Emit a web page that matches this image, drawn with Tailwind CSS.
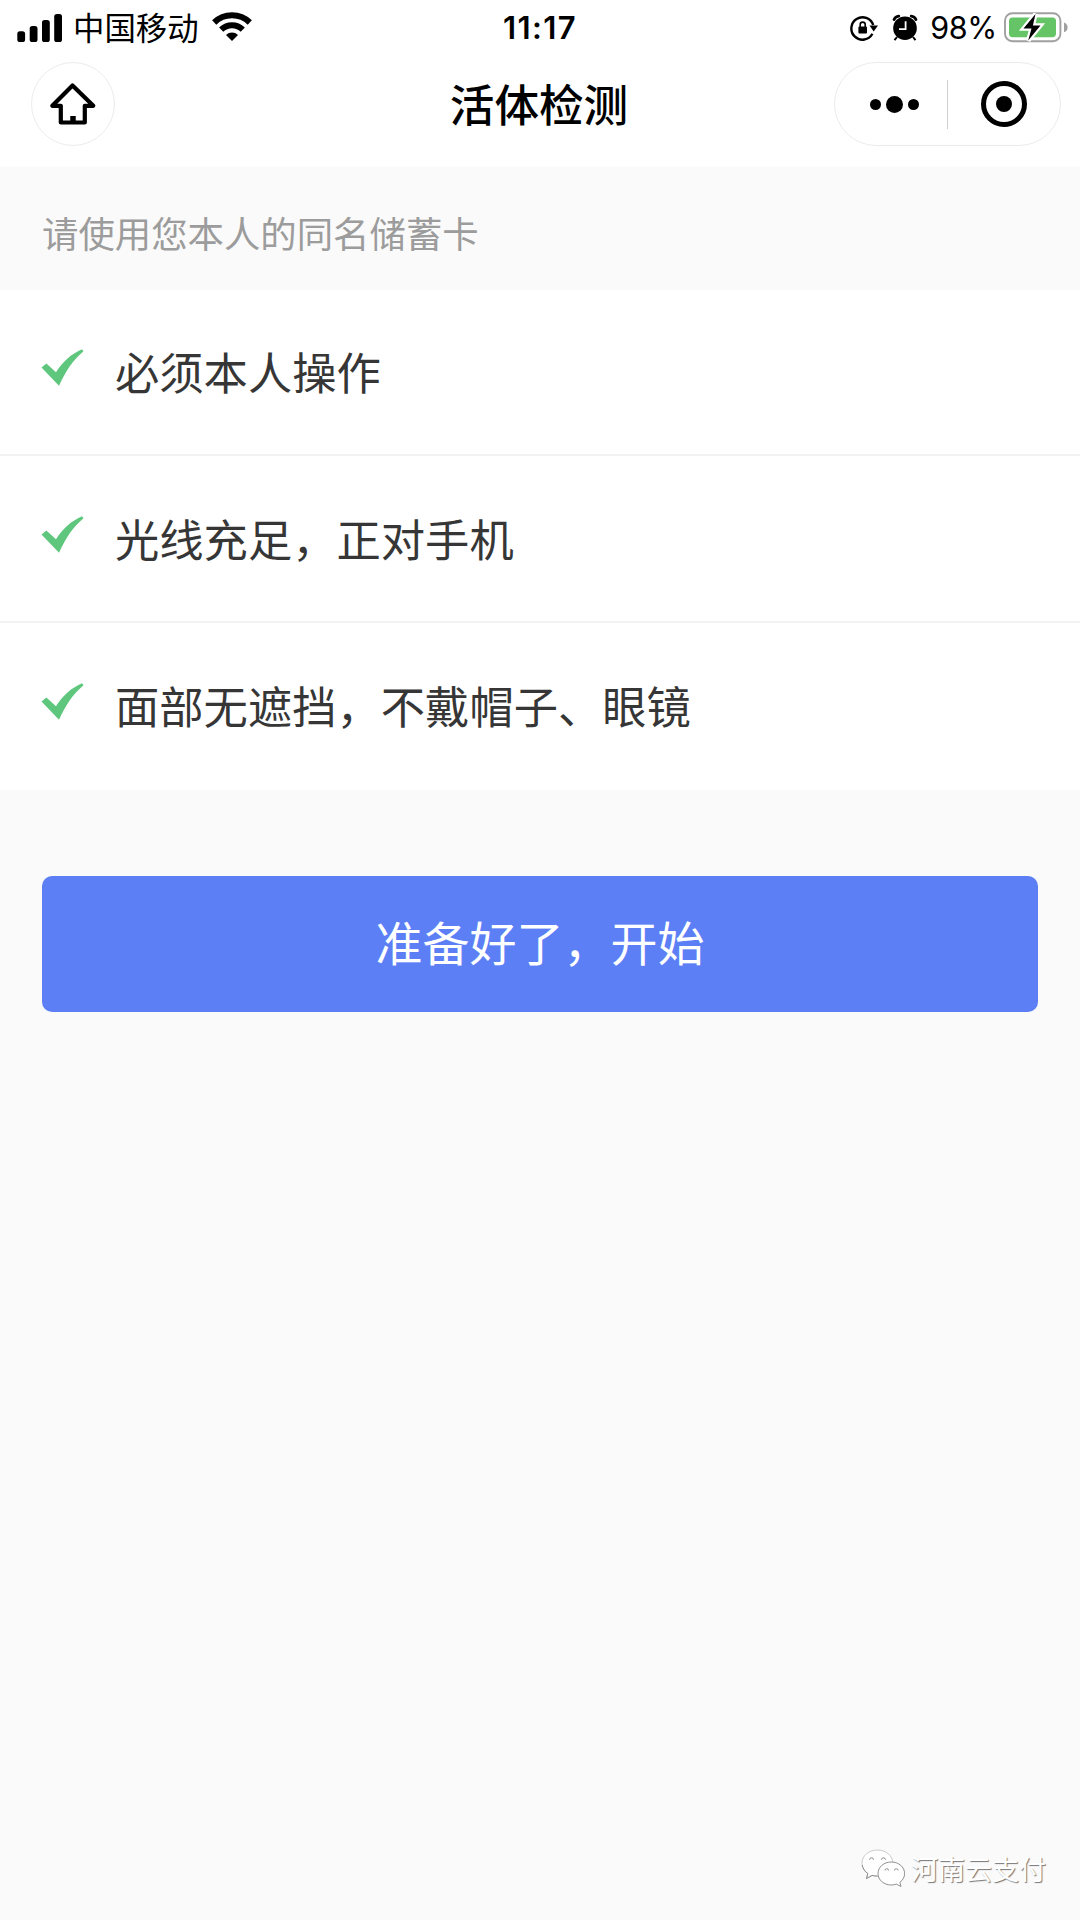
<!DOCTYPE html>
<html lang="zh-CN">
<head>
<meta charset="UTF-8">
<meta name="viewport" content="width=device-width, initial-scale=1">
<title>活体检测</title>
<script src="https://cdn.jsdelivr.net/npm/@tailwindcss/browser@4"></script>
</head>
<body class="bg-[#fafafa]">
<div class="flex h-[1920px] w-[1080px] flex-col overflow-hidden bg-[#fafafa] font-['Inter','Noto_Sans_CJK_SC',sans-serif] text-black">

  <header class="h-[167px] shrink-0 bg-white">
    <!-- Status bar -->
    <div class="grid h-[54px] grid-cols-3 items-center">
      <div class="flex h-[54px] items-center pl-[17px]">
        <svg class="h-7 w-[45px]" viewBox="0 0 45 28">
          <rect x="0.3" y="17.2" width="7.8" height="10.8" rx="2.6"/>
          <rect x="12.7" y="12" width="7.8" height="16" rx="2.6"/>
          <rect x="25" y="6" width="7.8" height="22" rx="2.6"/>
          <rect x="37.2" y="0" width="7.8" height="28" rx="2.6"/>
        </svg>
        <span class="ml-[11px] pt-0.5 text-[31.4px] leading-[54px]">中国移动</span>
        <svg class="ml-[13px] mb-[3px] h-[29px] w-10" viewBox="0 0 40 29">
          <g fill="none" stroke="#000" stroke-width="6">
            <path d="M2.2 10.5a25.6 25.6 0 0 1 35.6 0"/>
            <path d="M9.2 17.6a15.6 15.6 0 0 1 21.6 0"/>
          </g>
          <path d="M20 29l-6-5.9a8.5 8.5 0 0 1 12 0z"/>
        </svg>
      </div>
      <div class="pt-px text-center text-[31px] font-semibold leading-[54px] tracking-[1.4px]">11:17</div>
      <div class="flex h-[54px] items-center justify-end pr-[13px]">
        <svg class="h-[26px] w-7" viewBox="0 0 28 26">
          <path d="M22.4 18.8A11.2 11.2 0 1 1 23.2 10" fill="none" stroke="#000" stroke-width="2.4"/>
          <path d="M19.5 10.4h8.5l-4.3 6z"/>
          <rect x="8.4" y="11.4" width="8.6" height="7.2" rx="1"/>
          <path d="M10.2 12V9.6a2.5 2.5 0 0 1 5 0V12" fill="none" stroke="#000" stroke-width="1.6"/>
        </svg>
        <svg class="ml-[15px] h-[26px] w-6 overflow-visible" viewBox="0 0 24 26">
          <circle cx="12" cy="13.2" r="11.8"/>
          <path d="M1 4.6A6 6 0 0 1 5.8 1.2M23 4.6A6 6 0 0 0 18.2 1.2" fill="none" stroke="#000" stroke-width="2.8" stroke-linecap="round"/>
          <path d="M4 22l-2.5 3.2M20 22l2.5 3.2" stroke="#000" stroke-width="2"/>
          <path d="M12.6 6.2v8H6" fill="none" stroke="#fff" stroke-width="1.8"/>
        </svg>
        <span class="ml-[13px] pt-px text-[30.5px] leading-[54px] tracking-[-0.3px]">98%</span>
        <svg class="ml-[7px] mr-[-1px] mb-px h-[31px] w-16" viewBox="0 0 64 31">
          <rect x="1" y="1.2" width="55.4" height="28" rx="7.4" fill="#fff" stroke="#a0a0a0" stroke-width="1.9"/>
          <rect x="5" y="5.4" width="47" height="19.8" rx="3.6" fill="#65c466"/>
          <path d="M60 10.6c2.4.8 3.6 2.6 3.6 4.8s-1.2 4-3.6 4.8z" fill="#a0a0a0"/>
          <path d="M31.5 2L19.5 16.5h8l-3.3 12L36.5 13.4h-7.6z" stroke="#fff" stroke-width="4.4" paint-order="stroke"/>
        </svg>
      </div>
    </div>
    <!-- Navigation bar -->
    <nav class="flex h-[100px] items-center justify-between pl-[31px] pr-[19px]">
      <div class="flex w-[213px]">
        <div class="flex size-[84px] items-center justify-center rounded-full border border-[#ececec]">
          <svg class="h-[44px] w-[48px]" viewBox="0 0 48 44" fill="none" stroke="#000" stroke-width="4.2" stroke-linejoin="round">
            <path d="M23.5 3.5L3.3 23.8h8.5v16.7h24V23.8h8.5z"/>
            <path d="M24 40v-6" stroke-width="5.5"/>
          </svg>
        </div>
      </div>
      <h1 class="pt-1 text-[44.6px] font-medium leading-[64px]">活体检测</h1>
      <div class="flex h-[84px] w-[227px] items-center rounded-full border border-[#ececec]">
        <div class="flex w-[112px] items-center justify-center gap-[5px] pl-[7px]">
          <i class="size-[11px] rounded-full bg-black"></i>
          <i class="size-[17px] rounded-full bg-black"></i>
          <i class="size-[11px] rounded-full bg-black"></i>
        </div>
        <div class="h-[49px] w-px bg-[#cfcfcf]"></div>
        <div class="flex flex-1 items-center justify-center">
          <div class="flex size-[46px] items-center justify-center rounded-full border-[5px] border-black">
            <i class="size-4 rounded-full bg-black"></i>
          </div>
        </div>
      </div>
    </nav>
  </header>

  <p class="h-[123px] shrink-0 pl-[42px] pt-2 text-[36.4px] leading-[120px] text-[#9c9c9c]">请使用您本人的同名储蓄卡</p>

  <ul class="shrink-0 bg-white text-[44.3px] text-[#363636]">
    <li class="flex h-[166px] items-center border-b-2 border-[#f2f2f2] pl-[41px]">
      <svg class="mb-[9px] h-[37px] w-[43px]" viewBox="0 0 43 37"><path fill="#5fc77d" d="M0.5 18.6L5.4 14.6L15 23.2C21.5 13 30 5 41 0.3L42.5 2.2C32 11 25 21.5 18 36.7Z"/></svg>
      <span class="ml-[31px] pt-[5px]">必须本人操作</span>
    </li>
    <li class="flex h-[167px] items-center border-b-2 border-[#f2f2f2] pl-[41px]">
      <svg class="mb-[9px] h-[37px] w-[43px]" viewBox="0 0 43 37"><path fill="#5fc77d" d="M0.5 18.6L5.4 14.6L15 23.2C21.5 13 30 5 41 0.3L42.5 2.2C32 11 25 21.5 18 36.7Z"/></svg>
      <span class="ml-[31px] pt-[5px]">光线充足，正对手机</span>
    </li>
    <li class="flex h-[167px] items-center pl-[41px]">
      <svg class="mb-[11px] h-[37px] w-[43px]" viewBox="0 0 43 37"><path fill="#5fc77d" d="M0.5 18.6L5.4 14.6L15 23.2C21.5 13 30 5 41 0.3L42.5 2.2C32 11 25 21.5 18 36.7Z"/></svg>
      <span class="ml-[31px] pt-1">面部无遮挡，不戴帽子、眼镜</span>
    </li>
  </ul>

  <button class="mx-[42px] mt-[86px] h-[136px] shrink-0 rounded-[10px] bg-[#5c7ff6] pt-px text-[47px] text-white">准备好了，开始</button>

  <footer class="mt-auto flex items-center justify-end gap-[6px] pb-[27px] pr-[34px]">
    <svg class="mb-[5px] h-[39px] w-[44px]" viewBox="0 0 44 39" fill="#fff" stroke="#858585" stroke-width="0.9">
      <path d="M16.5 1C7.8 1 1 6.7 1 14.2c0 4.3 2.3 8 5.8 10.3L5.5 29.5l5.6-3.1c1.7.5 3.6.7 5.4.7 8.6 0 15.3-5.8 15.3-13S25.1 1 16.5 1z" stroke="#c4c4c4"/>
      <path d="M1.2 16c.6 3.6 2.600 6.500 5.600 8.500L5.500 29.500l5.600-3.100c1.700.5 3.600.7 5.400.7" fill="none"/>
      <path d="M30.3 13c-7.400 0-13.300 5-13.300 11.500s5.900 11.500 13.300 11.500c1.800 0 3.500-.3 5-.9l4.700 2.400-1.100-4.200c3-2.200 4.700-5.200 4.700-8.800 0-6.500-5.900-11.500-13.300-11.500z"/>
      <path d="M8.500 10.8a2 2 0 0 1 4 0M20.500 10.800a2 2 0 0 1 4 0M24 21.500a1.800 1.800 0 0 1 3.600 0M33.500 21.500a1.800 1.800 0 0 1 3.600 0" fill="none"/>
    </svg>
    <span class="text-[27px] leading-[40px] text-white [text-shadow:1px_1px_1px_#777]">河南云支付</span>
  </footer>
</div>
</body>
</html>
